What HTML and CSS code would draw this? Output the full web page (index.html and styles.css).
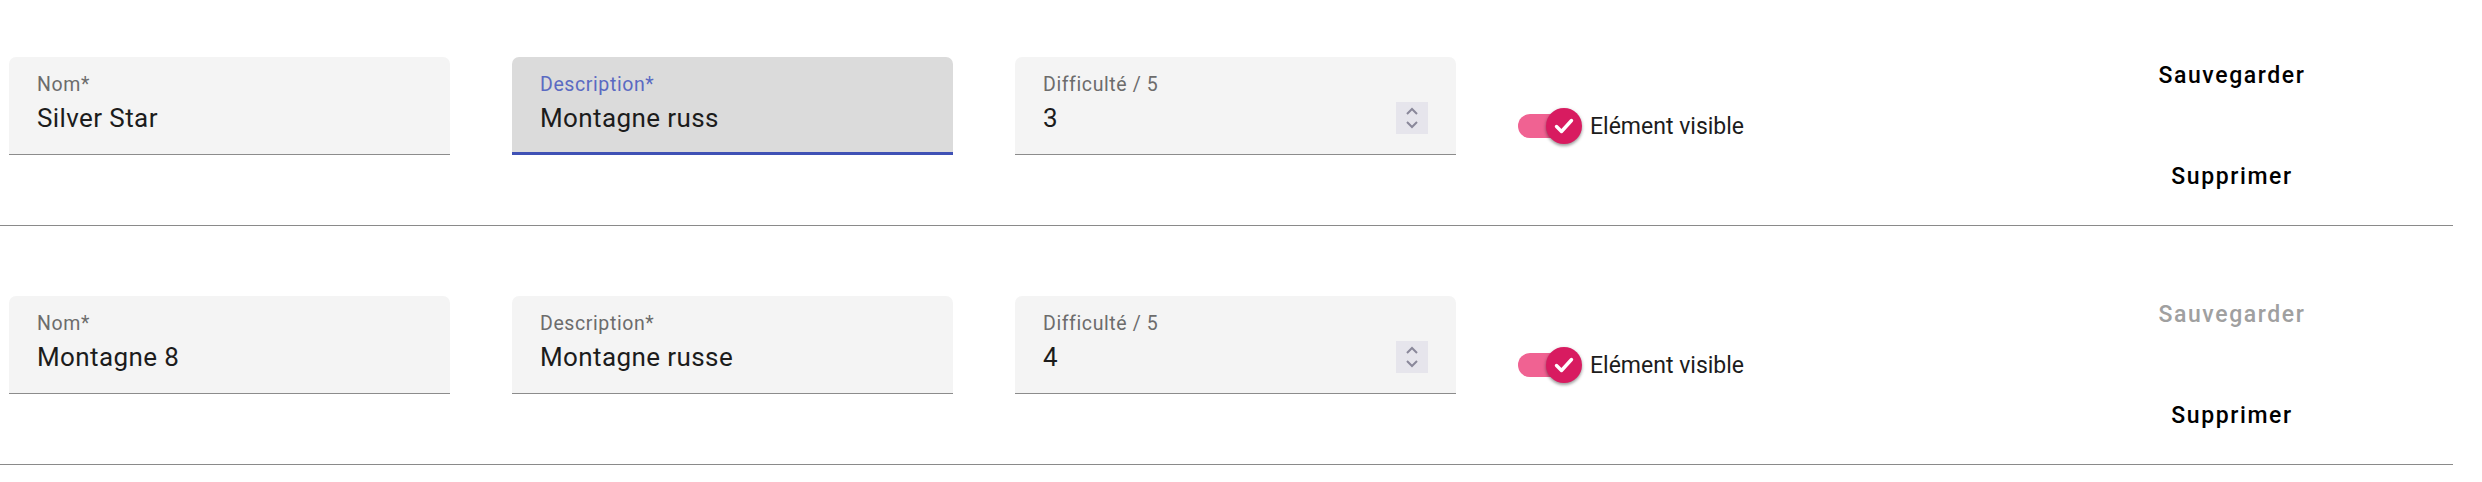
FILE: index.html
```html
<!DOCTYPE html>
<html lang="fr">
<head>
<meta charset="utf-8">
<title>Attractions</title>
<link rel="stylesheet" href="styles.css">
</head>
<body>
<div class="list">
  <div class="row">
    <div class="field-wrap">
      <div class="field">
        <div class="label">Nom*</div>
        <div class="value">Silver Star</div>
      </div>
    </div>
    <div class="field-wrap">
      <div class="field focused">
        <div class="label">Description*</div>
        <div class="value">Montagne russ</div>
      </div>
    </div>
    <div class="field-wrap">
      <div class="field">
        <div class="label">Difficulté / 5</div>
        <div class="value number"><span>3</span>
          <span class="spin"><svg width="14" height="22" viewBox="0 0 14 22"><path d="M2 7 L7 2 L12 7" fill="none" stroke="#8a889a" stroke-width="2"/><path d="M2 15 L7 20 L12 15" fill="none" stroke="#8a889a" stroke-width="2"/></svg></span>
        </div>
      </div>
    </div>
    <div class="toggle">
      <span class="track"><span class="thumb"><svg width="22" height="22" viewBox="0 0 22 22"><path d="M3.5 11.5 L8.5 16.5 L18.5 5.5" fill="none" stroke="#fff" stroke-width="3.4" stroke-linecap="round" stroke-linejoin="round"/></svg></span></span>
      <span class="toggle-label">Elément visible</span>
    </div>
    <div class="actions">
      <button class="btn">Sauvegarder</button>
      <button class="btn">Supprimer</button>
    </div>
  </div>
  <div class="row">
    <div class="field-wrap">
      <div class="field">
        <div class="label">Nom*</div>
        <div class="value">Montagne 8</div>
      </div>
    </div>
    <div class="field-wrap">
      <div class="field">
        <div class="label">Description*</div>
        <div class="value">Montagne russe</div>
      </div>
    </div>
    <div class="field-wrap">
      <div class="field">
        <div class="label">Difficulté / 5</div>
        <div class="value number"><span>4</span>
          <span class="spin"><svg width="14" height="22" viewBox="0 0 14 22"><path d="M2 7 L7 2 L12 7" fill="none" stroke="#8a889a" stroke-width="2"/><path d="M2 15 L7 20 L12 15" fill="none" stroke="#8a889a" stroke-width="2"/></svg></span>
        </div>
      </div>
    </div>
    <div class="toggle">
      <span class="track"><span class="thumb"><svg width="22" height="22" viewBox="0 0 22 22"><path d="M3.5 11.5 L8.5 16.5 L18.5 5.5" fill="none" stroke="#fff" stroke-width="3.4" stroke-linecap="round" stroke-linejoin="round"/></svg></span></span>
      <span class="toggle-label">Elément visible</span>
    </div>
    <div class="actions">
      <button class="btn" disabled>Sauvegarder</button>
      <button class="btn">Supprimer</button>
    </div>
  </div>
</div>
</body>
</html>
```

FILE: styles.css
```css
html, body {
  margin: 0;
  padding: 0;
  background: #ffffff;
  font-family: Roboto, "Liberation Sans", sans-serif;
  color: #1f1f1f;
  overflow: hidden;
}

.list {
  width: 2453px;
  margin-top: -13px;
}

.row {
  display: flex;
  align-items: center;
  gap: 62px;
  padding: 57px 121px 17px 9px;
  height: 164px;
  border-bottom: 1px solid #8a8a8a;
}

.field-wrap {
  width: 441px;
  height: 138px;
  flex: none;
}

.field {
  box-sizing: border-box;
  height: 98px;
  padding: 18px 28px 0 28px;
  background: #f4f4f4;
  border-radius: 7px 7px 0 0;
  border-bottom: 1px solid #8c8c8c;
}

.field.focused {
  background: #dbdbdb;
  border-bottom: 3px solid #3f51b5;
}

.label {
  font-size: 19.5px;
  line-height: 20px;
  color: #6c6c6c;
  letter-spacing: 0.6px;
}

.focused .label {
  color: #5a6ac2;
}

.value {
  margin-top: 8px;
  font-size: 26px;
  line-height: 30px;
  color: #1c1c1c;
  letter-spacing: 0.4px;
}

.value.number {
  display: flex;
  align-items: center;
  justify-content: space-between;
}

.spin {
  width: 32px;
  height: 32px;
  margin: -1px 0;
  background: #e6e5ec;
  display: flex;
  align-items: center;
  justify-content: center;
}

.toggle {
  display: flex;
  align-items: center;
  flex: none;
}

.track {
  position: relative;
  width: 63px;
  height: 24px;
  border-radius: 12px;
  background: #f06292;
}

.thumb {
  position: absolute;
  right: -1px;
  top: -6px;
  width: 36px;
  height: 36px;
  border-radius: 50%;
  background: #d81b60;
  box-shadow: 0 2px 3px rgba(0, 0, 0, 0.3), 0 1px 4px rgba(0, 0, 0, 0.15);
  display: flex;
  align-items: center;
  justify-content: center;
}

.toggle-label {
  margin-left: 9px;
  font-size: 23px;
  color: #1c1c1c;
}

.actions {
  margin-left: auto;
  width: 200px;
  display: flex;
  flex-direction: column;
  gap: 38px;
  flex: none;
}

.btn {
  height: 63px;
  border: none;
  background: transparent;
  font-family: Roboto, "Liberation Sans", sans-serif;
  font-weight: 500;
  font-size: 23px;
  letter-spacing: 1.6px;
  color: #000000;
  padding: 0;
  cursor: pointer;
}

.btn:disabled {
  color: #a0a0a0;
  cursor: default;
}
```
